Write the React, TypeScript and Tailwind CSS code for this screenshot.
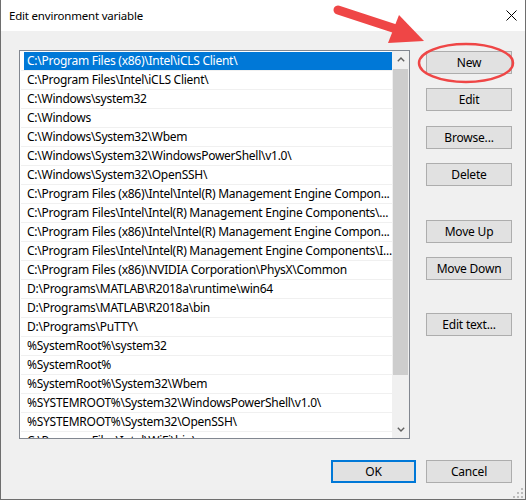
import React from 'react';

// --- list of path entries as shown in the dialog ---
const entries: string[] = [
  "C:\\Program Files (x86)\\Intel\\iCLS Client\\",
  "C:\\Program Files\\Intel\\iCLS Client\\",
  "C:\\Windows\\system32",
  "C:\\Windows",
  "C:\\Windows\\System32\\Wbem",
  "C:\\Windows\\System32\\WindowsPowerShell\\v1.0\\",
  "C:\\Windows\\System32\\OpenSSH\\",
  "C:\\Program Files (x86)\\Intel\\Intel(R) Management Engine Compon...",
  "C:\\Program Files\\Intel\\Intel(R) Management Engine Components\\...",
  "C:\\Program Files (x86)\\Intel\\Intel(R) Management Engine Compon...",
  "C:\\Program Files\\Intel\\Intel(R) Management Engine Components\\I...",
  "C:\\Program Files (x86)\\NVIDIA Corporation\\PhysX\\Common",
  "D:\\Programs\\MATLAB\\R2018a\\runtime\\win64",
  "D:\\Programs\\MATLAB\\R2018a\\bin",
  "D:\\Programs\\PuTTY\\",
  "%SystemRoot%\\system32",
  "%SystemRoot%",
  "%SystemRoot%\\System32\\Wbem",
  "%SYSTEMROOT%\\System32\\WindowsPowerShell\\v1.0\\",
  "%SYSTEMROOT%\\System32\\OpenSSH\\",
  "C:\\Program Files\\Intel\\WiFi\\bin\\",
];

const Chevron = ({ down }: { down?: boolean }) => (
  <svg width="8" height="5" viewBox="0 0 8 5" className={down ? "rotate-180" : ""}>
    <path d="M0.8 4.3 L4 1.1 L7.2 4.3" fill="none" stroke="#606060" strokeWidth="1.4" />
  </svg>
);

const DlgButton = ({ label, className = "" }: { label: string; className?: string }) => (
  <button className={`flex h-[23px] w-[86px] items-center justify-center border border-[#adadad] bg-[#e1e1e1] text-black ${className}`}>
    {label}
  </button>
);

export default function App() {
  return (
    <div className="relative h-[501px] w-[527px] bg-white font-['Noto_Sans',sans-serif] text-[12px] tracking-[-0.2px] text-black">
      <div className="flex h-[500px] w-[526px] flex-col border-x border-b border-[#6e6e6e]">
        {/* Title bar */}
        <div className="flex h-[31px] items-center justify-between bg-white pl-2 pr-[8px]">
          <span className="text-[11.5px] leading-none">Edit environment variable</span>
          <svg width="11" height="11" viewBox="0 0 11 11">
            <path d="M0.5 0.5 L10.5 10.5 M10.5 0.5 L0.5 10.5" stroke="#000" strokeWidth="1" />
          </svg>
        </div>

        {/* Body */}
        <div className="relative flex flex-1 flex-col bg-[#f0f0f0] pl-[18px] pr-[13px] pt-[19px]">
          <div className="flex">
            {/* List box */}
            <div className="flex h-[389px] w-[391px] border border-[#828790] bg-white">
              <div className="flex-1 overflow-hidden pt-px tracking-[-0.26px]">
                {entries.map((e, i) => (
                  <div key={i} className="ml-px flex h-[19px] border-b border-[#f0f0f0] pl-[3px]">
                    <span
                      className={`flex h-[18px] flex-1 items-center overflow-hidden whitespace-nowrap pl-[3px] ${
                        i === 0 ? "bg-[#0078d7] text-white" : ""
                      }`}
                    >
                      {e}
                    </span>
                  </div>
                ))}
              </div>
              {/* Scrollbar */}
              <div className="flex w-[17px] flex-col bg-[#f0f0f0]">
                <div className="flex h-[17px] items-center justify-center">
                  <Chevron />
                </div>
                <div className="mx-px mt-px h-[306px] bg-[#cdcdcd]" />
                <div className="flex-1" />
                <div className="flex h-[17px] items-center justify-center">
                  <Chevron down />
                </div>
              </div>
            </div>

            {/* Side buttons */}
            <div className="ml-[16px] flex w-[86px] flex-col pt-px">
              <DlgButton label="New" />
              <DlgButton label="Edit" className="mt-[14px]" />
              <DlgButton label="Browse..." className="mt-[15px]" />
              <DlgButton label="Delete" className="mt-[14px]" />
              <DlgButton label="Move Up" className="mt-[34px]" />
              <DlgButton label="Move Down" className="mt-[14px]" />
              <DlgButton label="Edit text..." className="mt-[33px]" />
            </div>
          </div>

          {/* OK / Cancel */}
          <div className="mt-[21px] flex justify-end gap-[10px]">
            <button className="flex h-[23px] w-[85px] items-center justify-center border-2 border-[#0078d7] bg-[#e1e1e1]">
              OK
            </button>
            <DlgButton label="Cancel" />
          </div>

          {/* resize grip */}
          <svg width="10" height="10" viewBox="0 0 10 10" className="absolute bottom-[1px] right-[2px]">
            <g fill="#bcbcbc">
              <rect x="8" y="0" width="2" height="2" />
              <rect x="4" y="4" width="2" height="2" />
              <rect x="8" y="4" width="2" height="2" />
              <rect x="0" y="8" width="2" height="2" />
              <rect x="4" y="8" width="2" height="2" />
              <rect x="8" y="8" width="2" height="2" />
            </g>
          </svg>
        </div>
      </div>

      {/* red annotation overlay */}
      <svg width="527" height="501" className="pointer-events-none absolute left-0 top-0">
        <line x1="338" y1="10" x2="396" y2="29" stroke="#ef4646" strokeWidth="9" strokeLinecap="round" />
        <polygon points="388,43 399,15 424,41" fill="#ef4646" />
        <ellipse cx="466" cy="63" rx="47" ry="19" fill="none" stroke="#ef4646" strokeWidth="2.5" />
      </svg>
    </div>
  );
}
